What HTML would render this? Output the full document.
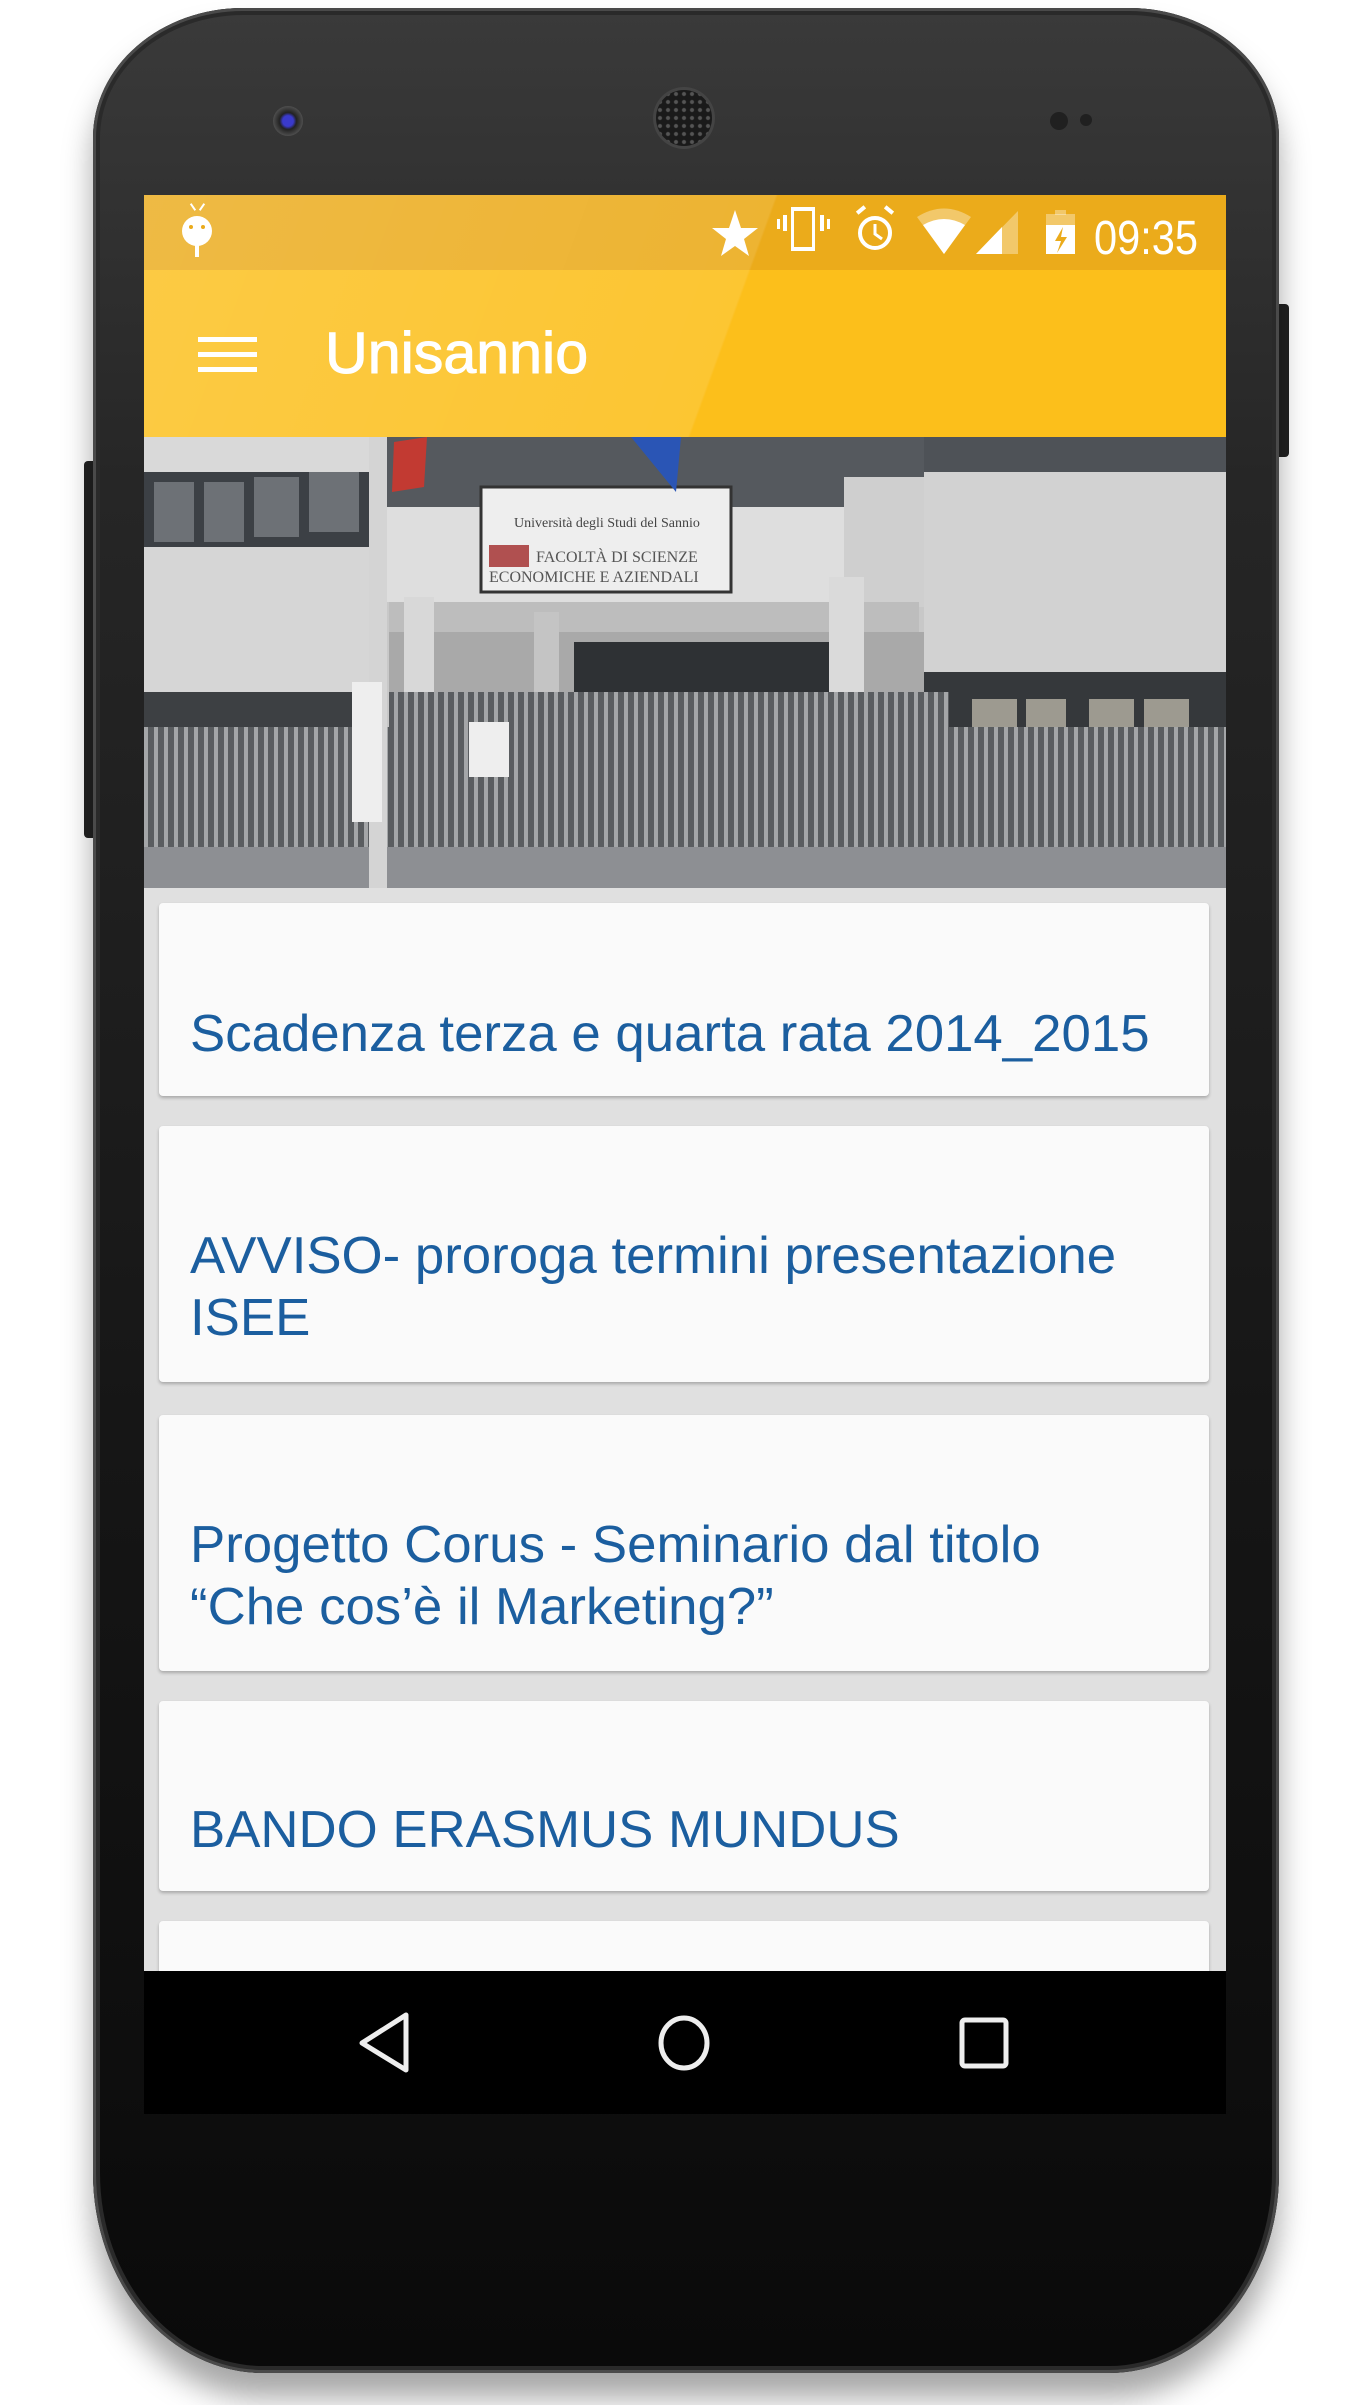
<!DOCTYPE html>
<html><head><meta charset="utf-8"><style>
html,body{margin:0;padding:0;background:#fff;}
body{width:1370px;height:2405px;position:relative;overflow:hidden;font-family:"Liberation Sans",sans-serif;}
.abs{position:absolute;}
.phone{left:93px;top:8px;width:1186px;height:2365px;border-radius:150px 150px 170px 170px/130px 130px 200px 200px;background:linear-gradient(180deg,#3a3a3a 0%,#262626 20%,#161616 60%,#0a0a0a 100%);box-shadow:0 0 0 3px #4a4a4a inset,0 0 0 7px #2a2a2a inset,0 25px 30px rgba(0,0,0,.35);}
.screen{left:144px;top:195px;width:1082px;height:1919px;background:#e0e0e0;overflow:hidden;}
.card{position:absolute;left:15px;width:1050px;background:#fafafa;border-radius:4px;box-shadow:0 2px 3px rgba(0,0,0,.25);}
.t{position:absolute;left:31px;color:#1b5e9f;font-size:52px;white-space:nowrap;transform-origin:0 0;transform:scaleX(1.015);line-height:62px;}
</style></head><body>
<div class="abs" style="left:84px;top:461px;width:14px;height:377px;background:#222;border-radius:4px 0 0 4px"></div>
<div class="abs" style="left:1275px;top:304px;width:14px;height:153px;background:#222;border-radius:0 4px 4px 0"></div>
<div class="abs phone"></div>
<div class="abs" style="left:273px;top:106px;width:30px;height:30px;border-radius:50%;background:radial-gradient(circle,#3a3acc 0 25%,#222 40%,#555 75%,#333 100%)"></div>
<div class="abs" style="left:656px;top:90px;width:56px;height:56px;border-radius:50%;background:radial-gradient(circle,#555 0 1.5px,#1a1a1a 2.5px) 0 0/8px 8px,#1a1a1a;box-shadow:0 0 0 3px #444"></div>
<div class="abs" style="left:1050px;top:112px;width:18px;height:18px;border-radius:50%;background:#202020"></div>
<div class="abs" style="left:1080px;top:114px;width:12px;height:12px;border-radius:50%;background:#202020"></div>

<div class="abs screen">
  <div class="abs" style="left:0;top:0;width:1082px;height:75px;background:#ebab1b"></div>
  <div class="abs" style="left:0;top:75px;width:1082px;height:167px;background:#fcbf1b"></div>
  <div class="abs" style="left:0;top:0;width:1082px;height:242px;background:linear-gradient(110deg,rgba(255,255,255,.18) 0,rgba(255,255,255,.1) 54%,rgba(255,255,255,0) 54.2%)"></div>
  <svg class="abs" style="left:0;top:0" width="1082" height="75" viewBox="0 0 1082 75">
    <g fill="#fff">
      <circle cx="53" cy="36" r="15"/><rect x="48" y="8" width="2" height="8" transform="rotate(-35 49 12)"/><rect x="57" y="8" width="2" height="8" transform="rotate(35 58 12)"/>
      <rect x="51" y="50" width="4" height="12"/>
      <circle cx="47" cy="32" r="2" fill="#ebab1b"/><circle cx="59" cy="32" r="2" fill="#ebab1b"/>
      <polygon points="591,15 597,33 614,33 600,44 605,61 591,51 577,61 582,44 568,33 585,33"/>
      <rect x="639" y="20" width="4" height="16"/><rect x="676" y="20" width="4" height="16"/>
      <rect x="633" y="24" width="3" height="10"/><rect x="683" y="24" width="3" height="10"/>
      <path d="M647 12h24v44h-24z M650 16v36h18v-36z" fill-rule="evenodd"/>
      <circle cx="731" cy="38" r="15" fill="none" stroke="#fff" stroke-width="4"/>
      <path d="M731 29v10l7 5" fill="none" stroke="#fff" stroke-width="3"/>
      <rect x="712" y="13" width="10" height="4" transform="rotate(-40 717 15)"/><rect x="740" y="13" width="10" height="4" transform="rotate(40 745 15)"/>
      <path d="M773 22 Q800 5 827 22 L800 59z" fill="#fff" opacity=".35"/>
      <path d="M779 30 Q800 18 821 30 L800 59z"/>
      <polygon points="832,59 874,16 874,59" opacity=".35"/>
      <polygon points="832,59 858,32 858,59"/>
      <rect x="902" y="19" width="29" height="40" opacity=".35"/><rect x="911" y="15" width="11" height="5" opacity=".35"/>
      <rect x="902" y="30" width="29" height="29"/>
      <path d="M919 32l-8 14h6l-4 12 10-16h-6z" fill="#ebab1b"/>
    </g>
    <text x="950" y="59" fill="#fff" font-size="48" font-family="Liberation Sans" textLength="104" lengthAdjust="spacingAndGlyphs">09:35</text>
  </svg>
  <div class="abs" style="left:54px;top:142px;width:59px;height:5px;background:#fff"></div>
  <div class="abs" style="left:54px;top:157px;width:59px;height:5px;background:#fff"></div>
  <div class="abs" style="left:54px;top:172px;width:59px;height:5px;background:#fff"></div>
  <div class="abs" style="left:181px;top:124px;color:#fff;font-size:58px;transform:scaleX(1.02);transform-origin:0 0;line-height:70px;-webkit-text-stroke:1px #fff">Unisannio</div>

  <svg class="abs" style="left:0;top:242px" width="1082" height="451" viewBox="0 0 1082 451">
    <rect width="1082" height="451" fill="#c8c8c8"/>
    <rect x="0" y="0" width="240" height="45" fill="#d9d9d9"/>
    <rect x="0" y="35" width="225" height="75" fill="#3c4045"/>
    <g fill="#6d7176"><rect x="10" y="45" width="40" height="60"/><rect x="60" y="45" width="40" height="60"/><rect x="110" y="40" width="45" height="60"/><rect x="165" y="35" width="50" height="60"/></g>
    <rect x="0" y="110" width="240" height="145" fill="#d6d6d6"/>
    <rect x="240" y="0" width="540" height="70" fill="#55595e"/>
    <rect x="240" y="70" width="540" height="95" fill="#dedede"/>
    <rect x="700" y="40" width="80" height="130" fill="#cfcfcf"/>
    <rect x="337" y="50" width="250" height="105" fill="#eeeeee" stroke="#333" stroke-width="3"/>
    <text x="370" y="90" font-size="14" fill="#444" font-family="Liberation Serif">Università degli Studi del Sannio</text>
    <rect x="345" y="108" width="40" height="22" fill="#b05050"/>
    <text x="392" y="125" font-size="16" fill="#555" font-family="Liberation Serif">FACOLTÀ DI SCIENZE</text>
    <text x="345" y="145" font-size="16" fill="#555" font-family="Liberation Serif">ECONOMICHE E AZIENDALI</text>
    <rect x="245" y="165" width="530" height="40" fill="#bdbdbd"/>
    <rect x="245" y="195" width="540" height="70" fill="#a9a9a9"/>
    <rect x="430" y="205" width="255" height="60" fill="#2e3134"/>
    <rect x="260" y="160" width="30" height="100" fill="#d8d8d8"/>
    <rect x="390" y="175" width="25" height="90" fill="#c4c4c4"/>
    <rect x="685" y="140" width="35" height="130" fill="#dadada"/>
    <rect x="780" y="0" width="302" height="35" fill="#4e5257"/>
    <rect x="780" y="35" width="302" height="200" fill="#d2d2d2"/>
    <rect x="780" y="235" width="302" height="110" fill="#35383b"/>
    <g fill="#9d9a90"><rect x="828" y="262" width="45" height="75"/><rect x="882" y="262" width="40" height="75"/><rect x="945" y="262" width="45" height="75"/><rect x="1000" y="262" width="45" height="75"/></g>
    <rect x="0" y="255" width="240" height="35" fill="#3d4043"/>
    <rect x="0" y="290" width="1082" height="125" fill="url(#f)"/>
    <rect x="245" y="255" width="560" height="40" fill="url(#f)"/>
    <rect x="0" y="410" width="1082" height="41" fill="#8d8f93"/>
    <rect x="225" y="0" width="18" height="451" fill="#d4d4d4"/>
    <rect x="208" y="245" width="30" height="140" fill="#eee"/>
    <path d="M250 5 L283 0 L280 50 L248 55z" fill="#c23a32"/>
    <path d="M487 0 L537 0 L532 55z" fill="#2a55b5"/>
    <rect x="325" y="285" width="40" height="55" fill="#eee"/>
    <defs><pattern id="f" width="10" height="20" patternUnits="userSpaceOnUse"><rect width="10" height="20" fill="#5a5d60"/><rect x="0" width="4" height="20" fill="#a4a6a8"/></pattern></defs>
  </svg>

  <div class="card" style="top:708px;height:193px"><div class="t" style="top:100px">Scadenza terza e quarta rata 2014_2015</div></div>
  <div class="card" style="top:931px;height:256px"><div class="t" style="top:99px">AVVISO- proroga termini presentazione<br>ISEE</div></div>
  <div class="card" style="top:1220px;height:256px"><div class="t" style="top:99px">Progetto Corus - Seminario dal titolo<br>“Che cos’è il Marketing?”</div></div>
  <div class="card" style="top:1506px;height:190px"><div class="t" style="top:98px">BANDO ERASMUS MUNDUS</div></div>
  <div class="card" style="top:1726px;height:200px"></div>

  <div class="abs" style="left:0;top:1776px;width:1082px;height:143px;background:#000"></div>
  <svg class="abs" style="left:0;top:1776px" width="1082" height="143">
    <path d="M262 44 L262 99 L218 72 Z" fill="none" stroke="#eee" stroke-width="5" stroke-linejoin="round"/>
    <ellipse cx="540" cy="72" rx="23" ry="25" fill="none" stroke="#eee" stroke-width="5"/>
    <rect x="818" y="49" width="44" height="46" rx="3" fill="none" stroke="#eee" stroke-width="5"/>
  </svg>
</div>
</body></html>
